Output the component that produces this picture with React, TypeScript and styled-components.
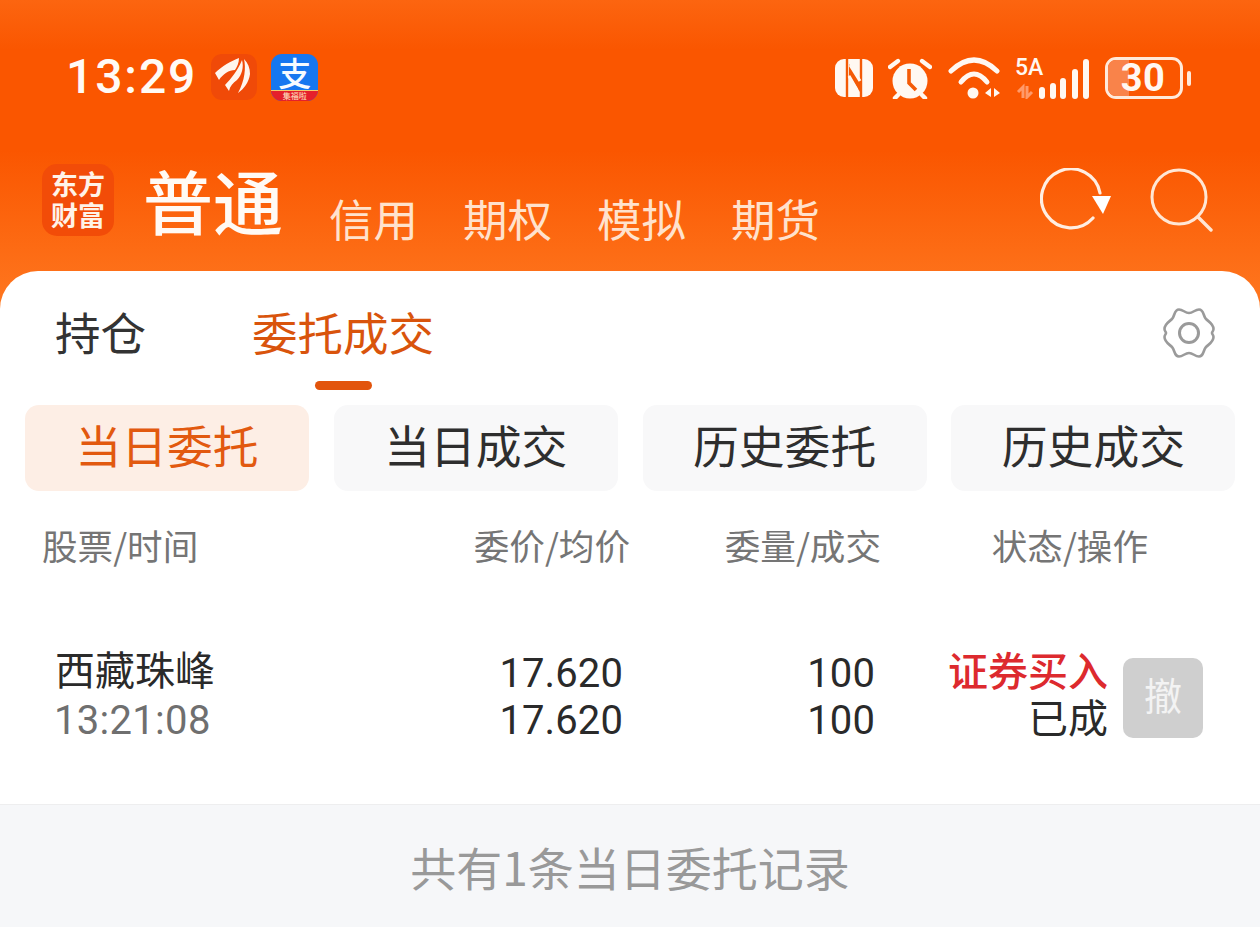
import React from 'react'
import styled, { createGlobalStyle } from 'styled-components'

const CJK = `"Noto Sans CJK SC", "Noto Sans", sans-serif`
const LATIN = `Roboto, "Noto Sans CJK SC", sans-serif`

const GlobalStyle = createGlobalStyle`
  html, body {
    margin: 0;
    padding: 0;
    background: #f6f7f9;
    overflow: hidden;
  }
  * { box-sizing: border-box; }
`

const MARKET_TABS = ['信用', '期权', '模拟', '期货']
const ORDER_TABS = ['当日委托', '当日成交', '历史委托', '历史成交']

const FanIcon = () => (
  <svg width="46" height="46" viewBox="0 0 46 46">
    <rect width="46" height="46" rx="11" fill="#f04a08" />
    <path d="M4 19 C11 12 20 7 28 4 C28 9 26 13 24 16 C18 16 12 20 8 26Z" fill="#fff6ee" />
    <path d="M14 31 C20 25 27 16 31 6 C33 13 31 21 26 26 C22 29 19 32 18 37Z" fill="#fff6ee" />
    <path d="M33 5 C35 14 34 26 27 39 C33 35 38 28 39 20 C39 14 37 9 33 5Z" fill="#fff6ee" />
  </svg>
)

const NfcIcon = () => (
  <svg width="38" height="42" viewBox="0 -2 38 42">
    <rect x="0" y="0" width="38" height="38" rx="9" fill="#fff8f2" />
    <path d="M12 0 V38 M26 0 V38" stroke="#f45a06" strokeWidth="2.4" />
    <path d="M14 5 L25 22 V33 L14 16Z" fill="#f45a06" />
    <path d="M15 6 L25 22 M14 17 L22 31" stroke="#fff8f2" strokeWidth="3" />
  </svg>
)

const AlarmIcon = () => (
  <svg width="44" height="42" viewBox="0 -2 44 42">
    <circle cx="22" cy="22" r="17.5" fill="#fff8f2" />
    <path d="M21 10 V24 L28 31" fill="none" stroke="#f45a06" strokeWidth="3.6" />
    <path d="M2 8 L10 2 M42 8 L34 2 M10 36 L7 39 M34 36 L37 39" stroke="#fff8f2" strokeWidth="4.4" strokeLinecap="round" />
  </svg>
)

const WifiIcon = () => (
  <svg width="54" height="42" viewBox="0 0 54 42">
    <path d="M4 14 Q27 -8 50 14" fill="none" stroke="#fff8f2" strokeWidth="5" strokeLinecap="round" />
    <path d="M14 25 Q27 9 40 25" fill="none" stroke="#fff8f2" strokeWidth="5" strokeLinecap="round" />
    <circle cx="26" cy="36" r="5.5" fill="#fff8f2" />
    <path d="M44 31 V40 L38 36Z M47 31 V40 L53 36Z" fill="#fff8f2" />
  </svg>
)

const SignalIcon = () => (
  <svg width="74" height="42" viewBox="0 0 74 42">
    <path d="M2 35 L7 30 V41 M11 29 V40 L16 35" stroke="#ff9a6a" strokeWidth="3" fill="none" />
    <rect x="23" y="30" width="6" height="12" rx="3" fill="#fff8f2" />
    <rect x="34" y="26" width="6" height="16" rx="3" fill="#fff8f2" />
    <rect x="44" y="21" width="6" height="21" rx="3" fill="#fff8f2" />
    <rect x="56" y="12" width="6" height="30" rx="3" fill="#fff8f2" />
    <rect x="67" y="2" width="6" height="40" rx="3" fill="#fff8f2" />
  </svg>
)

const RefreshIcon = () => (
  <svg width="72" height="66" viewBox="0 0 72 66">
    <path d="M53 50 A29.5 29.5 0 1 1 60 25" fill="none" stroke="#ffeee2" strokeWidth="3.2" strokeLinecap="round" />
    <path d="M52 28 H71 L63 46Z" fill="#fff" />
  </svg>
)

const SearchIcon = () => (
  <svg width="64" height="64" viewBox="0 0 64 64">
    <circle cx="29" cy="29" r="27" fill="none" stroke="#ffe6d4" strokeWidth="3" />
    <path d="M48 49 L61 62" stroke="#ffe6d4" strokeWidth="3.4" strokeLinecap="round" />
  </svg>
)

const GearIcon = () => (
  <svg width="54" height="52" viewBox="0 0 54 52">
    <path
      d="M27 6 C31 6 33 2.5 37 2.5 C42 2.5 41 9 44 12 C47 15 51.5 17 51.5 22 C51.5 24 50 25 50 26 C50 27 51.5 28 51.5 30 C51.5 35 47 37 44 40 C41 43 42 49.5 37 49.5 C33 49.5 31 46 27 46 C23 46 21 49.5 17 49.5 C12 49.5 13 43 10 40 C7 37 2.5 35 2.5 30 C2.5 28 4 27 4 26 C4 25 2.5 24 2.5 22 C2.5 17 7 15 10 12 C13 9 12 2.5 17 2.5 C21 2.5 23 6 27 6Z"
      fill="none"
      stroke="#9a9a9a"
      strokeWidth="2.6"
    />
    <circle cx="27" cy="26" r="9.5" fill="none" stroke="#9a9a9a" strokeWidth="3" />
  </svg>
)

const App: React.FC = () => {
  return (
    <Page>
      <GlobalStyle />
      <Header>
        <StatusBar>
          <StatusLeft>
            <Clock>13:29</Clock>
            <FanIcon />
            <AlipayBadge>
              <AlipayGlyph>支</AlipayGlyph>
              <AlipayStrip>集福啦</AlipayStrip>
            </AlipayBadge>
          </StatusLeft>
          <StatusRight>
            <NfcIcon />
            <AlarmIcon />
            <WifiIcon />
            <SignalWrap>
              <SignalLabel>5A</SignalLabel>
              <SignalIcon />
            </SignalWrap>
            <Battery>
              <BatteryFill />
              <BatteryText>30</BatteryText>
            </Battery>
            <BatteryTip />
          </StatusRight>
        </StatusBar>
        <NavRow>
          <Logo>
            <span>东方</span>
            <span>财富</span>
          </Logo>
          <ActiveMarket>普通</ActiveMarket>
          <MarketTabs>
            {MARKET_TABS.map((t) => (
              <MarketTab key={t}>{t}</MarketTab>
            ))}
          </MarketTabs>
          <NavIcons>
            <RefreshIcon />
            <SearchIcon />
          </NavIcons>
        </NavRow>
      </Header>
      <Card>
        <TopTabs>
          <TopTab>持仓</TopTab>
          <TopTab $active>
            委托成交
            <Underline />
          </TopTab>
          <GearWrap>
            <GearIcon />
          </GearWrap>
        </TopTabs>
        <OrderTabs>
          {ORDER_TABS.map((t, i) => (
            <OrderTab key={t} $active={i === 0}>
              {t}
            </OrderTab>
          ))}
        </OrderTabs>
        <TableHead>
          <HeadName>股票/时间</HeadName>
          <HeadNum>委价/均价</HeadNum>
          <HeadNum>委量/成交</HeadNum>
          <HeadNum>状态/操作</HeadNum>
        </TableHead>
        <Row>
          <NameCell>
            <StockName>西藏珠峰</StockName>
            <StockTime>13:21:08</StockTime>
          </NameCell>
          <NumCell>
            <span>17.620</span>
            <span>17.620</span>
          </NumCell>
          <NumCell>
            <span>100</span>
            <span>100</span>
          </NumCell>
          <StatusCell>
            <BuyLabel>证券买入</BuyLabel>
            <span>已成</span>
          </StatusCell>
          <CancelButton>撤</CancelButton>
        </Row>
      </Card>
      <Footer>共有1条当日委托记录</Footer>
    </Page>
  )
}

const Page = styled.div`
  width: 1260px;
  height: 927px;
  position: relative;
  overflow: hidden;
  font-family: ${CJK};
  background: linear-gradient(180deg, #fc6510 0, #fa5600 50px, #fa5600 150px, #ff7a22 320px) no-repeat;
  background-size: 100% 320px;
`

const Header = styled.header`
  height: 271px;
  display: flex;
  flex-direction: column;
`

const StatusBar = styled.div`
  height: 154px;
  padding: 52px 69px 0 66px;
  display: flex;
  justify-content: space-between;
  align-items: flex-start;
`

const StatusLeft = styled.div`
  display: flex;
  align-items: center;
  height: 50px;
  gap: 14px;
`

const Clock = styled.div`
  font-family: ${LATIN};
  font-size: 48px;
  font-weight: 500;
  letter-spacing: 1.9px;
  color: #fffaf5;
  line-height: 50px;
`

const AlipayBadge = styled.div`
  width: 47px;
  height: 47px;
  border-radius: 11px;
  overflow: hidden;
  background: #1677f0;
  display: flex;
  flex-direction: column;
  align-items: center;
`

const AlipayGlyph = styled.div`
  height: 36px;
  font-size: 33px;
  line-height: 36px;
  font-weight: 500;
  color: #f6fbff;
`

const AlipayStrip = styled.div`
  height: 11px;
  width: 100%;
  background: #e5202b;
  border-top: 1px solid #f4c96a;
  color: #ffe9c4;
  font-size: 8px;
  line-height: 10px;
  text-align: center;
`

const StatusRight = styled.div`
  display: flex;
  align-items: center;
  height: 50px;
  margin-top: 1px;
  gap: 15px;
`

const SignalWrap = styled.div`
  position: relative;
  width: 74px;
  height: 42px;
`

const SignalLabel = styled.span`
  position: absolute;
  left: -1px;
  top: -1px;
  font-family: ${LATIN};
  font-size: 23px;
  line-height: 24px;
  font-weight: 500;
  color: #fff8f2;
`

const Battery = styled.div`
  position: relative;
  width: 78px;
  height: 42px;
  border: 3px solid #ffeadb;
  border-radius: 11px;
  overflow: hidden;
`

const BatteryFill = styled.div`
  position: absolute;
  left: 0;
  top: 0;
  bottom: 0;
  width: 21px;
  background: #f9834a;
`

const BatteryText = styled.div`
  position: relative;
  text-align: center;
  font-family: ${LATIN};
  font-weight: 700;
  font-size: 38px;
  line-height: 36px;
  letter-spacing: 0.5px;
  padding-right: 2px;
  color: #fff8f2;
`

const BatteryTip = styled.div`
  width: 4px;
  height: 15px;
  border-radius: 2px;
  background: #ffeadb;
  margin-left: -11px;
`

const NavRow = styled.div`
  flex: 1;
  display: flex;
  align-items: flex-start;
  padding: 10px 46px 0 42px;
`

const Logo = styled.div`
  width: 72px;
  height: 72px;
  border-radius: 15px;
  background: #f24c08;
  color: #fff3e8;
  font-size: 27px;
  font-weight: 700;
  line-height: 31px;
  display: flex;
  flex-direction: column;
  align-items: center;
  justify-content: center;
  padding-bottom: 2px;
`

const ActiveMarket = styled.div`
  margin-left: 29px;
  margin-top: -2px;
  font-size: 70px;
  line-height: 76px;
  font-weight: 500;
  color: #fffaf5;
`

const MarketTabs = styled.div`
  display: flex;
  gap: 45px;
  margin-left: 46px;
  margin-top: 21px;
`

const MarketTab = styled.div`
  font-size: 44.5px;
  line-height: 66px;
  color: #ffe2cd;
`

const NavIcons = styled.div`
  margin-left: auto;
  display: flex;
  align-items: flex-start;
  gap: 38px;
  padding-top: 4px;
`

const Card = styled.main`
  height: 533px;
  background: #fff;
  border-radius: 38px 38px 0 0;
`

const TopTabs = styled.div`
  height: 134px;
  display: flex;
  padding: 27px 44px 0 55px;
  gap: 106px;
  align-items: flex-start;
`

const TopTab = styled.div<{ $active?: boolean }>`
  position: relative;
  font-size: 45.5px;
  line-height: 66px;
  color: ${(p) => (p.$active ? '#d9540c' : '#333')};
`

const Underline = styled.div`
  position: absolute;
  left: 63px;
  top: 83px;
  width: 57px;
  height: 9px;
  border-radius: 5px;
  background: #e2540c;
`

const GearWrap = styled.div`
  margin-left: auto;
  padding-top: 9px;
`

const OrderTabs = styled.div`
  display: grid;
  grid-template-columns: repeat(4, 284px);
  column-gap: 24.8px;
  padding-left: 25px;
`

const OrderTab = styled.div<{ $active?: boolean }>`
  height: 86px;
  padding-bottom: 8px;
  border-radius: 14px;
  display: flex;
  align-items: center;
  justify-content: center;
  font-size: 45.8px;
  color: ${(p) => (p.$active ? '#e2590f' : '#2e2e2e')};
  background: ${(p) => (p.$active ? '#fdeee5' : '#f8f8f9')};
`

const TableHead = styled.div`
  display: grid;
  grid-template-columns: 300px 288px 251px 267px;
  padding: 30px 0 0 42px;
  font-size: 35.6px;
  line-height: 48px;
  color: #757575;
`

const HeadName = styled.div``

const HeadNum = styled.div`
  text-align: right;
`

const Row = styled.div`
  display: grid;
  grid-template-columns: 299px 269px 252px 233px 80px;
  align-items: center;
  padding: 81px 0 0 55px;
  font-size: 40px;
  line-height: 47px;
  color: #2a2a2a;
`

const NameCell = styled.div`
  display: flex;
  flex-direction: column;
`

const StockName = styled.span`
  margin: -5px 0 5px 0;
`

const StockTime = styled.span`
  font-family: ${LATIN};
  color: #6f6f6f;
  letter-spacing: 0.3px;
  margin-left: -1px;
`

const NumCell = styled.div`
  display: flex;
  flex-direction: column;
  align-items: flex-end;
  font-family: ${LATIN};
  letter-spacing: 0.1px;
`

const StatusCell = styled.div`
  display: flex;
  flex-direction: column;
  align-items: flex-end;
  margin-top: -8px;
`

const BuyLabel = styled.span`
  color: #dd2a2e;
  font-weight: 500;
`

const CancelButton = styled.div`
  width: 80px;
  height: 80px;
  margin: 2px 0 0 15px;
  padding-bottom: 10px;
  border-radius: 10px;
  background: #cfcfcf;
  color: #f3f3f3;
  font-size: 38px;
  display: flex;
  align-items: center;
  justify-content: center;
`

const Footer = styled.footer`
  position: absolute;
  left: 0;
  right: 0;
  top: 804px;
  height: 123px;
  border-top: 1px solid #eeeeef;
  background: #f6f7f9;
  color: #999;
  font-size: 46px;
  display: flex;
  justify-content: center;
  align-items: center;
`

export default App
